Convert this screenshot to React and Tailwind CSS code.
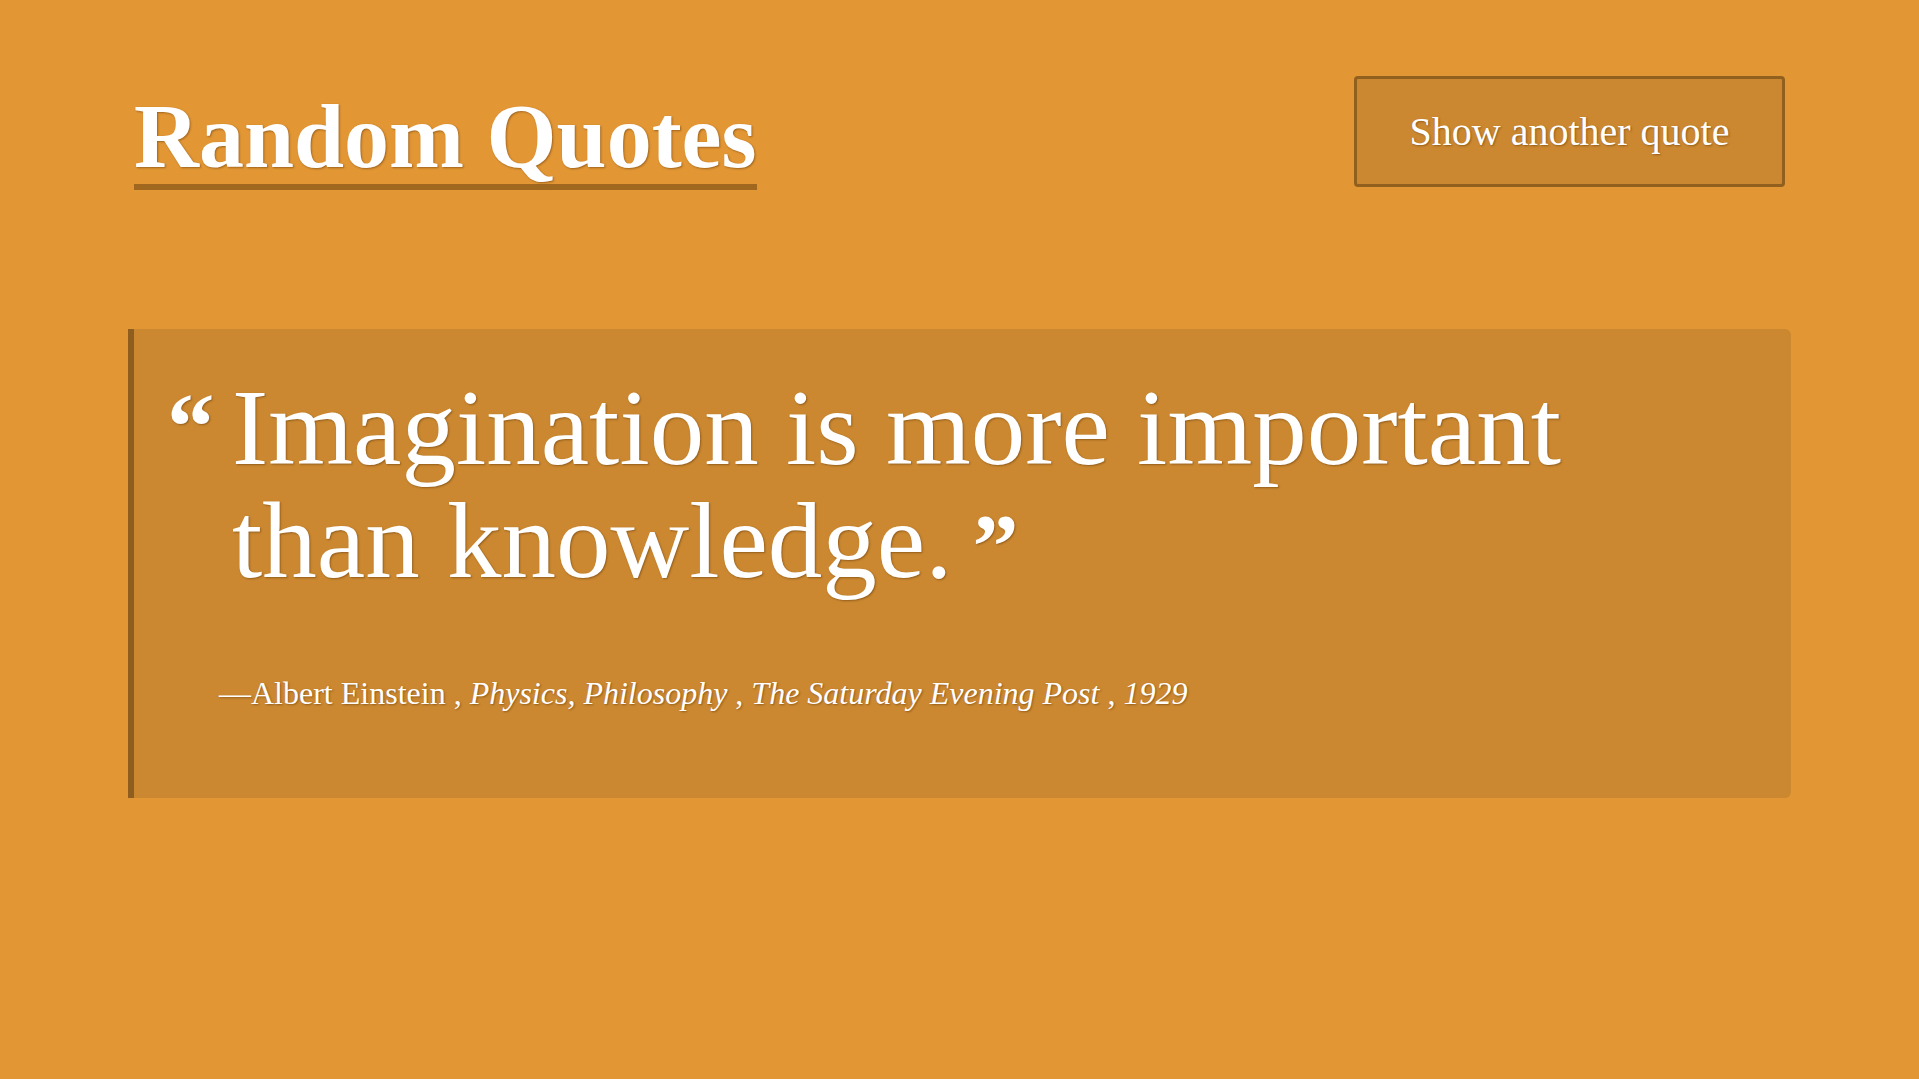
export default function App() {
  const shadow = "[text-shadow:1px_1px_2px_rgba(80,40,0,0.45)]";
  return (
    <div className="min-h-screen w-full bg-[#e29634] px-[128px] pt-[76px] font-['Liberation_Serif',serif] text-white">
      <header className="flex items-start justify-between px-[6px]">
        <h1 className="mt-[16px] text-[90px] font-bold leading-[90px]">
          <a
            href="#"
            className={`inline-block border-b-[6px] border-[#a0671f] pb-[2px] ${shadow}`}
          >
            Random Quotes
          </a>
        </h1>
        <button
          className={`flex h-[111px] w-[431px] items-center justify-center rounded-[4px] border-[3px] border-[#91601f] bg-[#cb8830] text-[40px] leading-none ${shadow}`}
        >
          Show another quote
        </button>
      </header>

      <blockquote className="mt-[139px] rounded-r-[6px] border-l-[6px] border-[#8f5e1f] bg-[#cb8830] pb-[81px] pl-[33px] pr-[80px] pt-[42px]">
        <div className="flex items-start">
          <span className={`w-[47px] shrink-0 text-[95px] font-bold leading-[113px] ${shadow}`}>
            “
          </span>
          <p className={`ml-[18px] max-w-[1450px] text-[109px] leading-[113px] ${shadow}`}>
            Imagination is more important than knowledge.
            <span className="ml-[20px] text-[92px] font-bold">”</span>
          </p>
        </div>
        <footer className={`ml-[52px] mt-[66px] text-[32px] leading-[1.5] ${shadow}`}>
          <span>—Albert Einstein</span> , <cite className="italic">Physics, Philosophy</cite> ,{" "}
          <cite className="italic">The Saturday Evening Post</cite> , <span className="italic">1929</span>
        </footer>
      </blockquote>
    </div>
  );
}
